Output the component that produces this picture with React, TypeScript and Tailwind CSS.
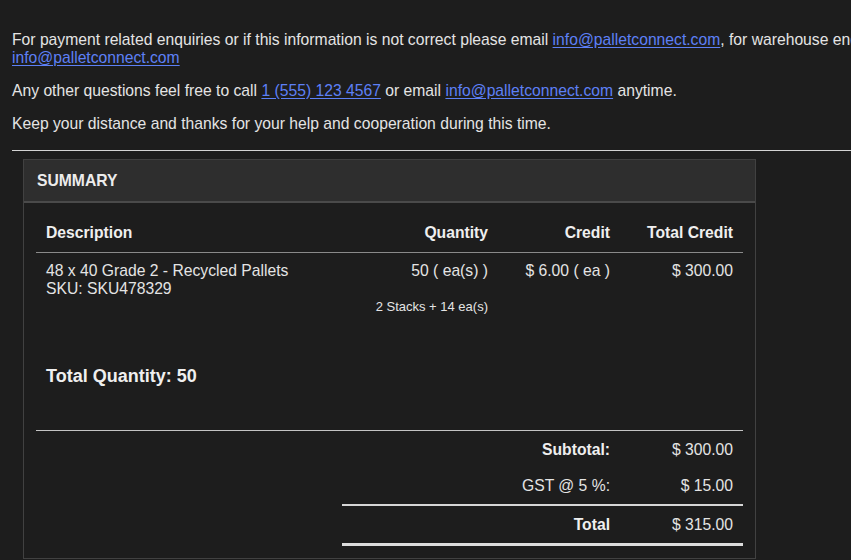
import React from 'react';

const Link: React.FC<{ children: React.ReactNode }> = ({ children }) => (
  <a href="#" className="text-[#5d80f6] underline underline-offset-[2px]">
    {children}
  </a>
);

const TotalRow: React.FC<{ label: string; value: string; bold?: boolean }> = ({ label, value, bold }) => (
  <div className="grid grid-cols-[1fr_123px] pt-[9.5px] pb-[9px] leading-[18px]">
    <div className={`text-right pr-[10px] ${bold ? 'font-bold text-[#efefef]' : ''}`}>{label}</div>
    <div className="text-right pr-[10px]">{value}</div>
  </div>
);

export default function App() {
  return (
    <div className="w-[851px] h-[560px] overflow-hidden bg-[#1d1d1d] text-[#e4e4e4] font-['Liberation_Sans',Arial,sans-serif] text-[15.7px] leading-[18px]">
      <div className="w-[1070px] px-[12px] pt-[31px]">
        <p>
          For payment related enquiries or if this information is not correct please email{' '}
          <Link>info@palletconnect.com</Link>, for warehouse enquiries please email{' '}
          <Link>info@palletconnect.com</Link>
        </p>
        <p className="mt-[15px]">
          Any other questions feel free to call <Link>1 (555) 123 4567</Link> or email{' '}
          <Link>info@palletconnect.com</Link> anytime.
        </p>
        <p className="mt-[15px]">Keep your distance and thanks for your help and cooperation during this time.</p>

        <hr className="mt-[17px] border-0 h-[1px] bg-[#d4d4d4]" />

        <div className="mt-[8px] ml-[11px] w-[733px] border border-[#414141]">
          <div className="h-[43px] bg-[#2e2e2e] border-b-2 border-[#4a4a4a] flex items-center px-[13px] font-bold text-[#ececec]">
            SUMMARY
          </div>

          <div className="px-[12px] pb-[12px]">
            <table className="w-full mt-[11px] border-collapse table-fixed">
              <colgroup>
                <col className="w-[320px]" />
                <col />
                <col className="w-[122px]" />
                <col className="w-[123px]" />
              </colgroup>
              <thead>
                <tr className="border-b border-[#8a8a8a] font-bold text-[#efefef]">
                  <th className="text-left pl-[10px] py-[10px]">Description</th>
                  <th className="text-right pr-[10px] py-[10px]">Quantity</th>
                  <th className="text-right pr-[10px] py-[10px]">Credit</th>
                  <th className="text-right pr-[10px] py-[10px]">Total Credit</th>
                </tr>
              </thead>
              <tbody>
                <tr className="align-top">
                  <td className="pl-[10px] pt-[9px] pb-[9px]">
                    48 x 40 Grade 2 - Recycled Pallets
                    <br />
                    SKU: SKU478329
                  </td>
                  <td className="text-right pr-[10px] pt-[9px] pb-[9px]">
                    <div>50 ( ea(s) )</div>
                    <div className="mt-[19px] text-[13px] leading-[15px]">2 Stacks + 14 ea(s)</div>
                  </td>
                  <td className="text-right pr-[10px] pt-[9px]">$ 6.00 ( ea )</td>
                  <td className="text-right pr-[10px] pt-[9px]">$ 300.00</td>
                </tr>
              </tbody>
            </table>

            <div className="border-b border-[#c4c4c4]">
              <div className="pl-[10px] mt-[43px] mb-[43px] text-[18px] leading-[21px] font-bold text-[#efefef]">
                Total Quantity: 50
              </div>
            </div>

            <div className="ml-auto w-[401px]">
              <TotalRow label="Subtotal:" value="$ 300.00" bold />
              <TotalRow label="GST @ 5 %:" value="$ 15.00" />
              <div className="h-[2px] bg-[#d6d6d6]" />
              <TotalRow label="Total" value="$ 315.00" bold />
              <div className="h-[3px] bg-[#dcdcdc]" />
            </div>
          </div>
        </div>
      </div>
    </div>
  );
}
